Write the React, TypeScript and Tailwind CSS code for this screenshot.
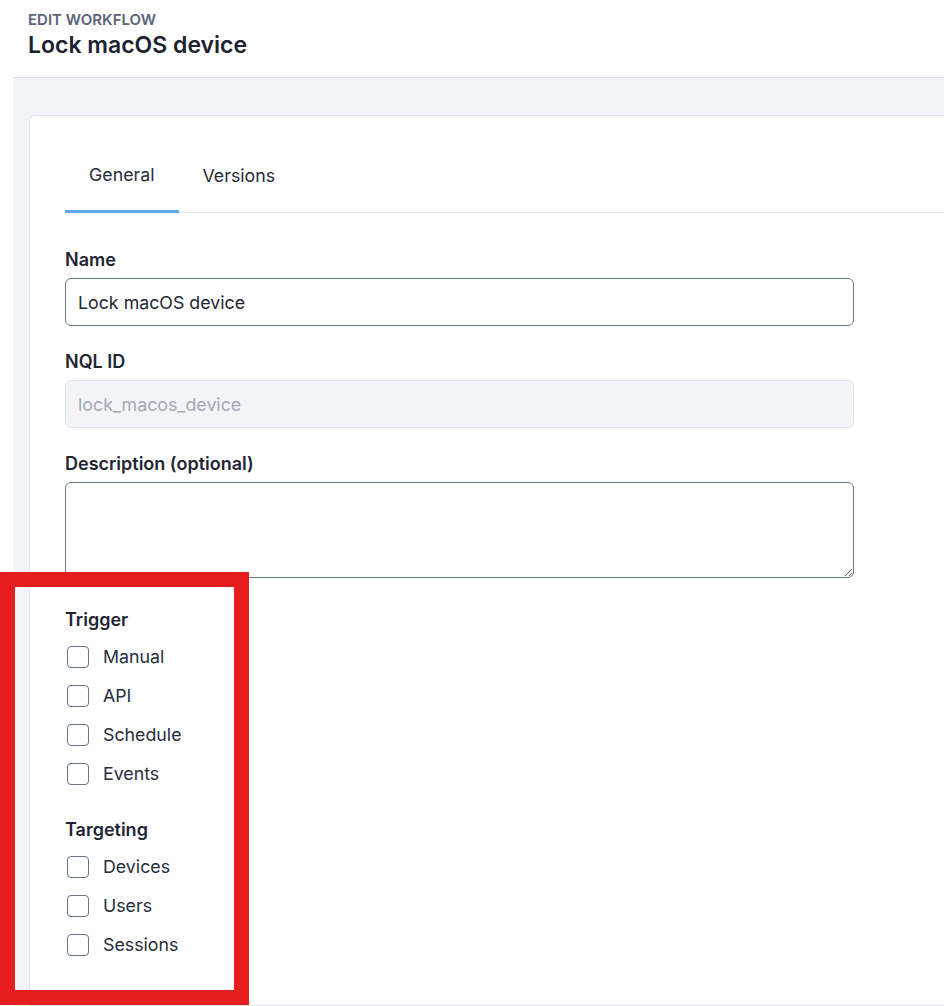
import React from 'react'

const triggers = ['Manual', 'API', 'Schedule', 'Events']
const targets = ['Devices', 'Users', 'Sessions']

function Check({ label }: { label: string }) {
  return (
    <label className="flex h-[39px] items-center">
      <span className="ml-[2px] h-[22px] w-[22px] rounded-[4px] border-[1.5px] border-[#65758f] bg-white" />
      <span className="ml-[14px] text-[17.8px] leading-[24px] text-[#262d3c]">{label}</span>
    </label>
  )
}

export default function App() {
  return (
    <div
      className="relative flex h-[1006px] w-[944px] overflow-hidden bg-white text-[#1f2533]"
      style={{ fontFamily: 'Inter, "Noto Sans", sans-serif' }}
    >
      {/* left white strip */}
      <div className="w-[13px] shrink-0 bg-white" />

      <div className="flex min-w-0 flex-1 flex-col">
        {/* Header */}
        <header className="h-[78px] shrink-0 border-b border-[#dcdfe5] bg-white px-[15px] pt-[10px]">
          <p className="text-[15px] font-semibold uppercase leading-[20px] text-[#5b6478]">Edit workflow</p>
          <h1 className="text-[23px] font-semibold leading-[30px] text-[#1c2230]">Lock macOS device</h1>
        </header>

        {/* Content */}
        <div className="flex-1 bg-[#f3f4f8] pl-[16px] pt-[37px]">
          <div className="h-full rounded-tl-[6px] border border-r-0 border-[#e3e5ec] bg-white pl-[35px] pt-[30px]">
            {/* Tabs */}
            <div className="flex border-b border-[#e5e7ee]">
              <button className="-mb-[1px] border-b-[3px] border-[#5ba8ee] px-6 pb-[23px] pt-[17px] text-[17.8px] leading-[24px] text-[#262d3c]">
                General
              </button>
              <button className="px-6 pb-[23px] pt-[17px] text-[17.8px] leading-[24px] text-[#262d3c]">Versions</button>
            </div>

            <div className="w-[789px]">
              <p className="mt-[35px] text-[18px] font-semibold leading-[24px]">Name</p>
              <input
                readOnly
                value="Lock macOS device"
                className="mt-[6px] h-[48px] w-full rounded-[6px] border border-[#68788f] bg-white px-[12px] text-[17.8px] text-[#1f2533] outline-none"
              />

              <p className="mt-[24px] text-[18px] font-semibold leading-[24px]">NQL ID</p>
              <input
                readOnly
                placeholder="lock_macos_device"
                className="mt-[6px] h-[48px] w-full rounded-[6px] border border-[#e0e3ea] bg-[#f3f4f8] px-[12px] text-[17.8px] outline-none placeholder:text-[#a3a9b6]"
              />

              <p className="mt-[24px] text-[18px] font-semibold leading-[24px]">Description (optional)</p>
              <textarea
                readOnly
                className="mt-[6px] block h-[96px] w-full rounded-[6px] border border-[#68788f] bg-white px-[12px] py-[10px] text-[17.8px] outline-none"
              />

              <p className="mt-[30px] text-[18px] font-semibold leading-[24px]">Trigger</p>
              <div className="mt-[5px] flex flex-col">
                {triggers.map((t) => (
                  <Check key={t} label={t} />
                ))}
              </div>

              <p className="mt-[25px] text-[18px] font-semibold leading-[24px]">Targeting</p>
              <div className="mt-[5px] flex flex-col">
                {targets.map((t) => (
                  <Check key={t} label={t} />
                ))}
              </div>
            </div>
          </div>
        </div>
      </div>

      {/* red annotation box */}
      <div className="pointer-events-none absolute left-0 top-[572px] h-[433px] w-[249px] border-[15px] border-[#e51d1d]" />
    </div>
  )
}
